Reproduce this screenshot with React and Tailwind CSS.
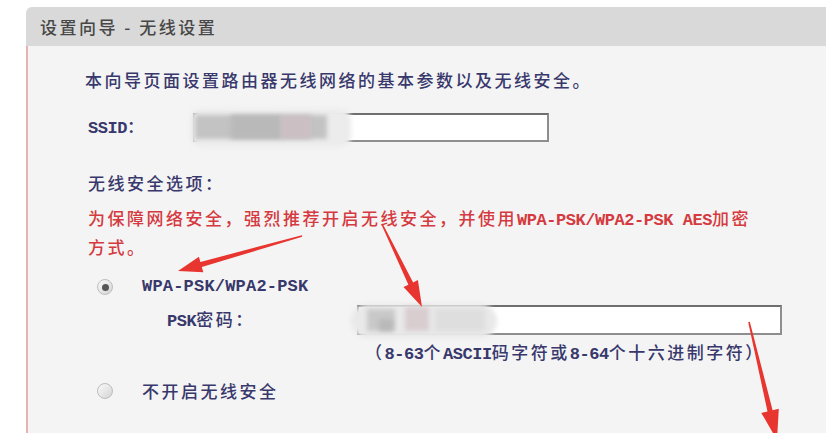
import React from 'react';

const cjk = "font-['Noto_Sans_CJK_SC',sans-serif]";

// half-width runs (the old router page uses a bitmap font: ascii is exactly half a CJK cell)
function M({ children }) {
  return (
    <span className="font-['Liberation_Mono','Noto_Sans_CJK_SC',monospace] text-[17px] font-bold tracking-[-0.45px]">
      {children}
    </span>
  );
}

function Radio({ checked }) {
  return (
    <span className="w-[16px] h-[16px] rounded-full border border-[#bdbdbd] bg-gradient-to-br from-[#fafafa] to-[#d4d4d4] flex items-center justify-center shrink-0">
      {checked && <span className="w-[7px] h-[7px] rounded-full bg-[#555]" />}
    </span>
  );
}

function arrowPoints(x1, y1, x2, y2, head = 24, hw = 8, w0 = 0.8, w1 = 2.6) {
  const dx = x2 - x1;
  const dy = y2 - y1;
  const len = Math.hypot(dx, dy);
  const ux = dx / len;
  const uy = dy / len;
  const nx = -uy;
  const ny = ux;
  const bx = x2 - ux * head;
  const by = y2 - uy * head;
  const p = (x, y) => `${x.toFixed(1)},${y.toFixed(1)}`;
  return [
    p(x1 + nx * w0, y1 + ny * w0),
    p(bx + nx * w1, by + ny * w1),
    p(bx + nx * hw, by + ny * hw),
    p(x2, y2),
    p(bx - nx * hw, by - ny * hw),
    p(bx - nx * w1, by - ny * w1),
    p(x1 - nx * w0, y1 - ny * w0),
  ].join(' ');
}

function Blur({ className }) {
  return <div className={`absolute blur-[2px] ${className}`} />;
}

export default function App() {
  return (
    <div className={`relative w-[826px] h-[433px] overflow-hidden bg-white pt-[7px] ${cjk}`}>
      <div className="ml-[26px]">
        <div className="h-[39px] bg-[#d9d9d9] rounded-tl-[6px] pl-[14px] flex items-center text-[17px] font-medium tracking-[2.5px] text-[#474747]">
          设置向导 - 无线设置
        </div>

        <div className="h-[400px] flex flex-col border-l-2 border-[#e6b3b3] bg-[#f4f4f4] pl-[57px] text-[17px] font-medium tracking-[2.5px] text-[#38386c]">
          <div className="mt-[21px] h-[26px] leading-[26px]">本向导页面设置路由器无线网络的基本参数以及无线安全。</div>

          <div className="mt-[20px] h-[29px] flex items-center pl-[3px]">
            <span className="w-[105px]">
              <M>SSID</M>：
            </span>
            <div className="relative w-[356px] h-[29px] border-2 border-[#8e8e8e] border-t-[#6f6f6f] bg-white">
              <Blur className="-left-[4px] -top-[6px] w-[160px] h-[38px] rounded-[10px] bg-[#ececec]" />
              <Blur className="left-0 top-0 w-[132px] h-[24px] bg-[#c3c3c3]" />
              <Blur className="left-[36px] top-0 w-[50px] h-[24px] bg-[#b9b9b9]" />
              <Blur className="left-[86px] top-0 w-[30px] h-[24px] bg-[#cbbfc3]" />
            </div>
          </div>

          <div className="mt-[28px] h-[26px] leading-[26px] pl-[3px]">无线安全选项：</div>

          <div className="mt-[9px] pl-[3px] leading-[26px] text-[#d43a3f]">
            为保障网络安全，强烈推荐开启无线安全，并使用<M>WPA-PSK/WPA2-PSK AES</M>加密
            <br />
            方式。
          </div>

          <div className="mt-[14px] h-[26px] flex items-center pl-[12px]">
            <Radio checked />
            <span className="ml-[29px] font-['Liberation_Mono',monospace] text-[17px] font-bold tracking-[0.2px]">WPA-PSK/WPA2-PSK</span>
          </div>

          <div className="mt-[5px] h-[30px] flex items-center pl-[82px]">
            <span className="w-[190px]">
              <M>PSK</M>密码：
            </span>
            <div className="relative w-[425px] h-[30px] border-2 border-[#8e8e8e] border-t-[#6f6f6f] bg-white">
              <Blur className="-left-[8px] -top-[3px] w-[146px] h-[34px] rounded-full bg-[#e9e9e9]" />
              <Blur className="left-[8px] top-[2px] w-[28px] h-[22px] bg-[#c9c9c9]" />
              <Blur className="left-[20px] top-[12px] w-[14px] h-[12px] bg-[#b9b9b9]" />
              <Blur className="left-[46px] top-0 w-[24px] h-[24px] bg-[#d9cdd0]" />
              <Blur className="left-[76px] top-[2px] w-[50px] h-[22px] bg-[#dedede]" />
            </div>
          </div>

          <div className="mt-[4px] h-[26px] leading-[26px] pl-[280px]">
            （<M>8-63</M>个<M>ASCII</M>码字符或<M>8-64</M>个十六进制字符）
          </div>

          <div className="mt-[13px] h-[26px] flex items-center pl-[12px]">
            <Radio />
            <span className="ml-[29px]">不开启无线安全</span>
          </div>
        </div>
      </div>

      <svg className="absolute inset-0 pointer-events-none" width="826" height="433" viewBox="0 0 826 433">
        <polygon points={arrowPoints(302, 236, 178, 271)} fill="#e8352f" />
        <polygon points={arrowPoints(382, 224, 422, 307, 26, 8)} fill="#e8352f" />
        <polygon points={arrowPoints(749, 322, 777, 440, 30, 9)} fill="#e8352f" />
      </svg>
    </div>
  );
}
